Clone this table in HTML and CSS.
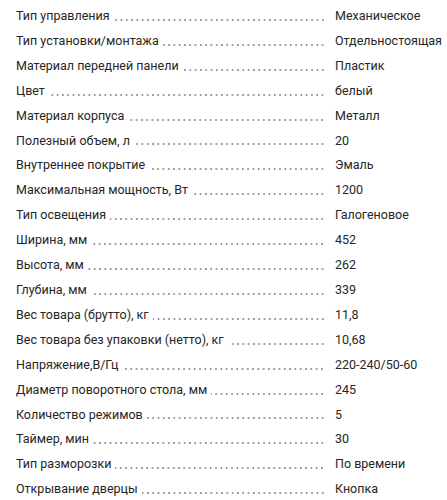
FILE: index.html
```html
<!DOCTYPE html>
<html lang="ru">
<head>
<meta charset="utf-8">
<link rel="stylesheet" href="styles.css">
</head>
<body>
<div class="specs">
  <div class="row"><span class="label">Тип управления</span><span class="dots"></span><span class="value">Механическое</span></div>
  <div class="row"><span class="label">Тип установки/монтажа</span><span class="dots"></span><span class="value">Отдельностоящая</span></div>
  <div class="row"><span class="label">Материал передней панели</span><span class="dots"></span><span class="value">Пластик</span></div>
  <div class="row"><span class="label">Цвет</span><span class="dots"></span><span class="value">белый</span></div>
  <div class="row"><span class="label">Материал корпуса</span><span class="dots"></span><span class="value">Металл</span></div>
  <div class="row"><span class="label">Полезный объем, л</span><span class="dots"></span><span class="value">20</span></div>
  <div class="row"><span class="label">Внутреннее покрытие</span><span class="dots"></span><span class="value">Эмаль</span></div>
  <div class="row"><span class="label">Максимальная мощность, Вт</span><span class="dots"></span><span class="value">1200</span></div>
  <div class="row"><span class="label">Тип освещения</span><span class="dots"></span><span class="value">Галогеновое</span></div>
  <div class="row"><span class="label">Ширина, мм</span><span class="dots"></span><span class="value">452</span></div>
  <div class="row"><span class="label">Высота, мм</span><span class="dots"></span><span class="value">262</span></div>
  <div class="row"><span class="label">Глубина, мм</span><span class="dots"></span><span class="value">339</span></div>
  <div class="row"><span class="label">Вес товара (брутто), кг</span><span class="dots"></span><span class="value">11,8</span></div>
  <div class="row"><span class="label">Вес товара без упаковки (нетто), кг</span><span class="dots"></span><span class="value">10,68</span></div>
  <div class="row"><span class="label">Напряжение,В/Гц</span><span class="dots"></span><span class="value">220-240/50-60</span></div>
  <div class="row"><span class="label">Диаметр поворотного стола, мм</span><span class="dots"></span><span class="value">245</span></div>
  <div class="row"><span class="label">Количество режимов</span><span class="dots"></span><span class="value">5</span></div>
  <div class="row"><span class="label">Таймер, мин</span><span class="dots"></span><span class="value">30</span></div>
  <div class="row"><span class="label">Тип разморозки</span><span class="dots"></span><span class="value">По времени</span></div>
  <div class="row"><span class="label">Открывание дверцы</span><span class="dots"></span><span class="value">Кнопка</span></div>
</div>
</body>
</html>
```

FILE: styles.css
```css
html, body {
  margin: 0;
  padding: 0;
  background: #fff;
}

.specs {
  font-family: Roboto, "Noto Sans", sans-serif;
  font-size: 12.5px;
  line-height: 16.9px;
  color: #262626;
  padding-top: 4px;
}

.row {
  display: flex;
  align-items: flex-end;
  padding: 4px 0 4px 16px;
}

.label {
  white-space: nowrap;
}

.dots {
  flex: 1;
  height: 2px;
  margin: 0 0 4px 4px;
  background-image: radial-gradient(circle, #9a9a9a 0.75px, transparent 1.15px);
  background-size: 5.3px 2px;
  background-repeat: repeat-x;
  background-position: right center;
}

.value {
  flex: 0 0 112px;
  margin-left: 10px;
  white-space: nowrap;
}
```
